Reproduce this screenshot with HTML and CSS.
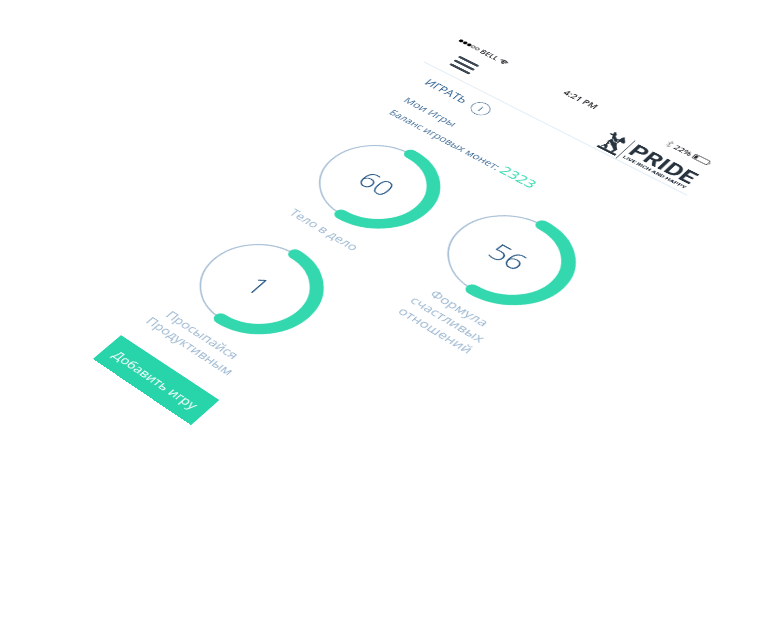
FILE: index.html
```html
<!DOCTYPE html>
<html lang="ru">
<head>
<meta charset="utf-8">
<title>Pride</title>
<meta name="viewport" content="width=device-width, initial-scale=1">
<link rel="stylesheet" href="styles.css">
</head>
<body>
<main class="screen">
  <header class="header">
    <div class="status">
      <div class="status-side">
        <svg class="dots" viewBox="0 0 34 6" aria-hidden="true"><circle cx="3" cy="3" r="3"/><circle cx="10" cy="3" r="3"/><circle cx="17" cy="3" r="3"/><circle class="hollow" cx="24" cy="3" r="2.5"/><circle class="hollow" cx="31" cy="3" r="2.5"/></svg>
        <span>BELL</span>
        <svg class="wifi" viewBox="0 0 14 10" aria-hidden="true"><path d="M1 4a9 9 0 0 1 12 0M3 6a6 6 0 0 1 8 0"/><path class="solid" d="M4.5 7.5a4 4 0 0 1 5 0L7 10z"/></svg>
      </div>
      <span class="clock">4:21 PM</span>
      <div class="status-side status-end">
        <svg class="bluetooth" viewBox="0 0 8 12" aria-hidden="true"><path d="M1 3l6 6-3 2.500V.500L7 3 1 9"/></svg>
        <span>22%</span>
        <svg class="battery" viewBox="0 0 26 10" aria-hidden="true"><rect x=".5" y=".5" width="22" height="9" rx="2"/><path class="solid" d="M2 2h4v6H2z"/><path class="solid" d="M24 3q2 2 0 4z"/></svg>
      </div>
    </div>
    <div class="nav">
      <button class="menu" type="button" aria-label="Меню"><span></span><span></span><span></span></button>
      <a class="logo" href="#">
        <svg class="horse" viewBox="0 0 30 42" aria-hidden="true"><path d="M1 37h28v4H1z"/><path d="M6 21l2-5-3-6-4 0-1-2 4-1-1-4 3-1 2 3 1 4 4 3 3-1 1-5 2-3 2 3 4 5 0 3-2 1-4-1-1 6 3 5 4 4-1 4-1 4h-3l1-5-5-4-5-3-2 3 3 4 1 5h-3l-2-4-3 4H4l3-7z"/><path class="gap" d="M9 15l4 4 4-1M8 23l4 2M15 13l2 3"/></svg>
        <span class="logo-text"><strong>PRIDE</strong><small>LIVE RICH AND HAPPY</small></span>
      </a>
    </div>
  </header>
  <section class="intro">
    <div class="title">
      <h1>ИГРАТЬ</h1>
      <button class="info" type="button" aria-label="Информация">i</button>
    </div>
    <h2>Мои Игры</h2>
    <p>Баланс игровых монет: <b>2323</b></p>
  </section>
  <section class="games">
    <div class="column">
      <article class="game">
        <div class="ring"><svg viewBox="0 0 150 150" aria-hidden="true"><circle cx="75" cy="75" r="67"/><path d="M75 8a67 67 0 0 1 0 134"/></svg><span>60</span></div>
        <h3>Тело в дело</h3>
      </article>
      <article class="game">
        <div class="ring"><svg viewBox="0 0 150 150" aria-hidden="true"><circle cx="75" cy="75" r="67"/><path d="M75 8a67 67 0 0 1 0 134"/></svg><span>1</span></div>
        <h3>Просыпайся<br>Продуктивным</h3>
      </article>
    </div>
    <div class="column">
      <article class="game">
        <div class="ring"><svg viewBox="0 0 150 150" aria-hidden="true"><circle cx="75" cy="75" r="67"/><path d="M75 8a67 67 0 0 1 0 134"/></svg><span>56</span></div>
        <h3>Формула<br>счастливых<br>отношений</h3>
      </article>
    </div>
  </section>
  <button class="add" type="button">Добавить игру</button>
</main>
</body>
</html>
```
FILE: styles.css
```css
* { box-sizing: border-box; }
html { overflow: hidden; }
body {
  margin: 0;
  height: 100vh;
  overflow: hidden;
  background: #fff;
  font-family: "Open Sans", "Noto Sans", sans-serif;
  color: #45709b;
}
h1, h2, h3, p { margin: 0; font-weight: 300; }
button { font: inherit; border: 0; padding: 0; background: none; }

/* A phone screen laid on a tilted plane; the origin is the left end of the header rule. */
.screen {
  width: 375px;
  transform-origin: 0 0;
  transform: matrix3d(0.5597, 0.316, 0, -0.00021, -0.547, 0.4009, 0, -0.0001415, 0, 0, 1, 0, 423, 62, 0, 1) translateY(-72px);
}

.header { height: 72px; border-bottom: 2px solid #e8f0f8; }
.status {
  display: grid;
  grid-template-columns: 1fr auto 1fr;
  align-items: center;
  height: 20px;
  padding: 0 8px 0 10px;
  font-size: 11px;
  line-height: 20px;
  font-weight: 600;
  color: #26292c;
}
.status-side { display: flex; align-items: center; gap: 3px; }
.status-end { justify-content: flex-end; }
.clock { font-size: 12px; }
.dots { width: 30px; height: 6px; }
.hollow { fill: none; stroke: #26292c; }
.wifi { width: 12px; height: 10px; fill: none; stroke: #26292c; stroke-width: 2; }
.solid { fill: #26292c; stroke: none; }
.bluetooth { width: 8px; height: 12px; fill: none; stroke: #8d9296; }
.battery { width: 23px; height: 10px; fill: none; stroke: #26292c; }

.nav { display: flex; justify-content: space-between; padding: 0 8px 0 28px; }
.menu { display: flex; flex-direction: column; gap: 5px; margin-top: 14px; height: 22px; }
.menu span { width: 30px; height: 4px; border-radius: 2px; background: #3c4954; }
.logo { display: flex; align-items: flex-end; gap: 2px; height: 50px; color: #27333e; text-decoration: none; }
.horse { width: 27px; height: 42px; fill: #27333e; }
.gap { fill: none; stroke: #fff; }
.logo-text { display: flex; flex-direction: column; padding: 0 0 4px 4px; border-left: 1px solid #5d666e; font-family: Roboto, sans-serif; }
.logo strong { font-size: 30px; line-height: 28px; font-weight: 700; }
.logo small { font-size: 8px; line-height: 8px; font-weight: 700; }

.intro { padding: 12px 25px 0; }
.title { display: flex; align-items: center; gap: 10px; height: 28px; }
.title h1 { font-size: 16px; line-height: 28px; font-weight: 400; color: #2e608f; }
.info {
  width: 24px;
  height: 24px;
  border: 1px solid #3f6d99;
  border-radius: 50%;
  font-size: 14px;
  line-height: 22px;
  color: #2e608f;
}
.intro h2 { margin-top: 14px; font-size: 15px; line-height: 28px; font-weight: 400; }
.intro p { font-size: 14px; line-height: 28px; font-weight: 400; }
.intro b { font-size: 20px; line-height: 28px; font-weight: 400; color: #35d9b0; }

.games { display: grid; grid-template-columns: 180px 1fr; padding-top: 24px; }
.column { display: flex; flex-direction: column; align-items: center; gap: 34px; }
.column + .column h3 { padding-left: 12px; }
.game { display: flex; flex-direction: column; align-items: center; gap: 14px; }
.ring { display: grid; place-items: center; }
.ring svg, .ring span { grid-area: 1 / 1; }
.ring svg { width: 150px; height: 150px; fill: none; }
.ring circle { stroke: #a9c0d7; stroke-width: 2; }
.ring path { stroke: #34d8ae; stroke-width: 16; stroke-linecap: round; }
.ring span { font-size: 36px; line-height: 40px; font-weight: 300; color: #265786; }
.game h3 { font-size: 17px; line-height: 22px; text-align: center; font-weight: 400; color: #9db8d1; }

.add {
  display: block;
  width: 148px;
  height: 48px;
  margin: 28px 0 0 20px;
  background: #28d5aa;
  color: #fff;
  font-size: 17px;
}
```
